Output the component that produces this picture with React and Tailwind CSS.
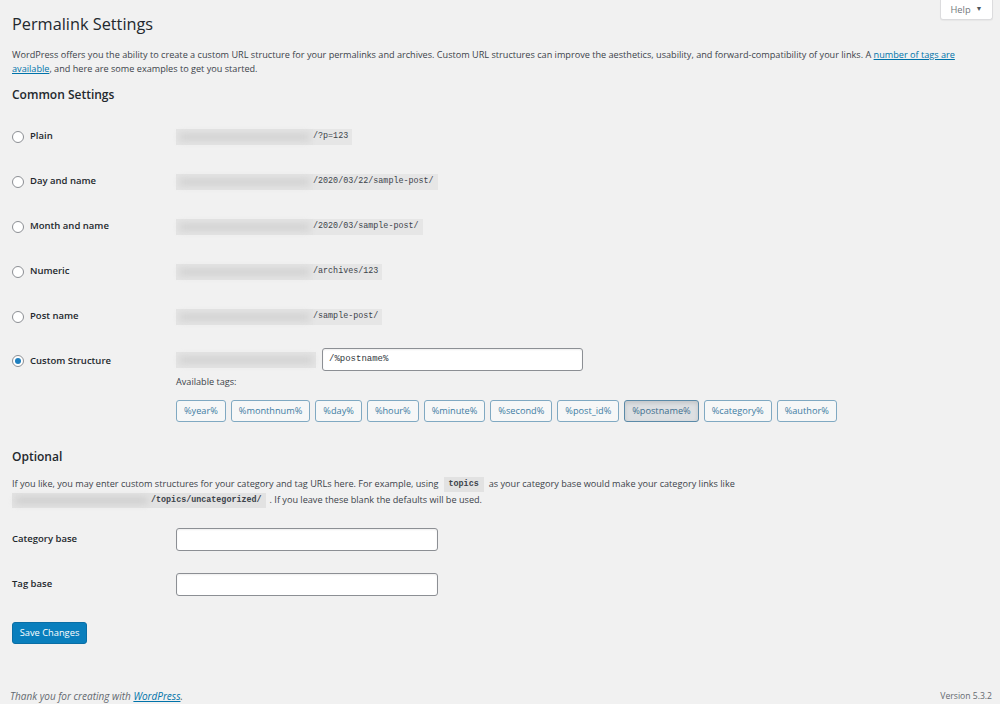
import React from 'react';

const sans = { fontFamily: '"Open Sans", "Noto Sans", sans-serif' };

const commonRows = [
  { label: 'Plain', path: '/?p=123' },
  { label: 'Day and name', path: '/2020/03/22/sample-post/' },
  { label: 'Month and name', path: '/2020/03/sample-post/' },
  { label: 'Numeric', path: '/archives/123' },
  { label: 'Post name', path: '/sample-post/' },
];

const tags = ['%year%', '%monthnum%', '%day%', '%hour%', '%minute%', '%second%', '%post_id%', '%postname%', '%category%', '%author%'];

function Radio({ checked }) {
  return (
    <span className="flex h-[12px] w-[12px] shrink-0 items-center justify-center rounded-full border border-[#8c8f94] bg-white">
      {checked && <span className="h-[6px] w-[6px] rounded-full bg-[#1e7fbf]" />}
    </span>
  );
}

function Blur({ w }) {
  return (
    <span className="flex h-[16px] items-center bg-[#e4e4e4]" style={{ width: w }}>
      <span className="mx-[3px] h-[8px] flex-1 rounded-full bg-[#d3d3d3] blur-[3px]" />
    </span>
  );
}

function Code({ children }) {
  return (
    <code className="flex h-[16px] items-center bg-[#e6e6e6] pr-[4px] font-['Liberation_Mono',monospace] text-[8.4px] text-[#3c434a]">
      {children}
    </code>
  );
}

export default function App() {
  return (
    <div className="relative flex min-h-[704px] flex-col bg-[#f1f1f1] pl-[12px] text-[#23282d]" style={sans}>
      <button className="absolute right-[7px] top-0 flex h-[20px] w-[53px] items-center justify-center gap-[5px] rounded-b-[3px] border border-t-0 border-[#dcdcde] bg-white text-[9.3px] text-[#72777c] shadow-[0_1px_1px_rgba(0,0,0,0.04)]">
        Help <span className="text-[7px] text-[#50575e]">▼</span>
      </button>

      <h1 className="pt-[12px] text-[16.3px] leading-[24px] font-normal text-[#23282d]">Permalink Settings</h1>

      <p className="mt-[12px] whitespace-nowrap text-[9.15px] leading-[14px] text-[#3c434a]">
        WordPress offers you the ability to create a custom URL structure for your permalinks and archives. Custom URL structures can improve the aesthetics, usability, and forward-compatibility of your links. A{' '}
        <a className="text-[#0073aa] underline">number of tags are</a>
        <br />
        <a className="text-[#0073aa] underline">available</a>, and here are some examples to get you started.
      </p>

      <h2 className="mt-[10px] text-[12px] leading-[18px] font-semibold text-[#23282d]">Common Settings</h2>

      <div className="mt-[10px] flex flex-col">
        {commonRows.map((row) => (
          <div key={row.label} className="flex h-[45px] items-center">
            <label className="flex w-[164px] items-center gap-[6px] text-[9.5px] font-semibold text-[#23282d]">
              <Radio />
              {row.label}
            </label>
            <div className="flex items-center">
              <Blur w={137} />
              <Code>{row.path}</Code>
            </div>
          </div>
        ))}

        <div className="flex pt-[9px]">
          <label className="flex h-[23px] w-[164px] items-center gap-[6px] pt-[3px] text-[9.5px] font-semibold text-[#23282d]">
            <Radio checked />
            Custom Structure
          </label>
          <div className="flex flex-col">
            <div className="flex items-center">
              <Blur w={140} />
              <span className="w-[6px] self-stretch" />
              <div className="flex h-[23px] w-[261px] items-center rounded-[3px] border border-[#8c8f94] bg-white px-[6px] shadow-[inset_0_1px_2px_rgba(0,0,0,0.07)]">
                <span className="font-['Liberation_Mono',monospace] text-[9px] text-[#32373c]">/%postname%</span>
              </div>
            </div>
            <div className="mt-[4px] text-[9.15px] leading-[14px] text-[#3c434a]">Available tags:</div>
            <div className="mt-[11px] flex gap-[5px]">
              {tags.map((t) => (
                <span
                  key={t}
                  className={
                    t === '%postname%'
                      ? 'flex h-[22px] items-center rounded-[3px] border border-[#5b8aa8] bg-[#dcdfe2] px-[7px] text-[9.2px] text-[#3d6e8e] shadow-[inset_0_2px_4px_rgba(0,0,0,0.12)]'
                      : 'flex h-[22px] items-center rounded-[3px] border border-[#80a9c2] bg-[#f6f7f7] px-[7px] text-[9.2px] text-[#3d7ca3]'
                  }
                >
                  {t}
                </span>
              ))}
            </div>
          </div>
        </div>
      </div>

      <h2 className="mt-[26px] text-[12px] leading-[18px] font-semibold text-[#23282d]">Optional</h2>

      <p className="mt-[10px] text-[9.15px] leading-[16px] text-[#3c434a]">
        <span className="flex items-center whitespace-nowrap">
          If you like, you may enter custom structures for your category and tag URLs here. For example, using
          <code className="mx-[5px] bg-[#e2e2e2] px-[5px] font-['Liberation_Mono',monospace] text-[8.4px] font-bold leading-[15px] text-[#3c434a]">topics</code>
          as your category base would make your category links like
        </span>
        <span className="flex items-center whitespace-nowrap">
          <span className="flex h-[15px] w-[139px] items-center bg-[#e2e2e2]">
            <span className="mx-[3px] h-[7px] flex-1 rounded-full bg-[#cfcfcf] blur-[3px]" />
          </span>
          <code className="bg-[#e2e2e2] pr-[4px] font-['Liberation_Mono',monospace] text-[8.4px] font-bold leading-[15px] text-[#3c434a]">/topics/uncategorized/</code>
          <span className="ml-[4px]">. If you leave these blank the defaults will be used.</span>
        </span>
      </p>

      <div className="mt-[20px] flex items-center">
        <label className="w-[164px] text-[9.5px] font-semibold text-[#23282d]">Category base</label>
        <div className="h-[23px] w-[262px] rounded-[3px] border border-[#8c8f94] bg-white shadow-[inset_0_1px_2px_rgba(0,0,0,0.07)]" />
      </div>
      <div className="mt-[22px] flex items-center">
        <label className="w-[164px] text-[9.5px] font-semibold text-[#23282d]">Tag base</label>
        <div className="h-[23px] w-[262px] rounded-[3px] border border-[#8c8f94] bg-white shadow-[inset_0_1px_2px_rgba(0,0,0,0.07)]" />
      </div>

      <div className="mt-[26px]">
        <button className="flex h-[22px] w-[75px] items-center justify-center rounded-[3px] border border-[#0a6ea5] bg-[#0a7fbd] text-[9.3px] text-white">
          Save Changes
        </button>
      </div>

      <footer className="mt-auto flex items-center justify-between pb-[1px] pr-[8px] leading-[14px] text-[#646970]">
        <span className="-ml-[2px] text-[10px] italic">
          Thank you for creating with <a className="text-[#0073aa] underline">WordPress</a>.
        </span>
        <span className="text-[8.6px]">Version 5.3.2</span>
      </footer>
    </div>
  );
}
